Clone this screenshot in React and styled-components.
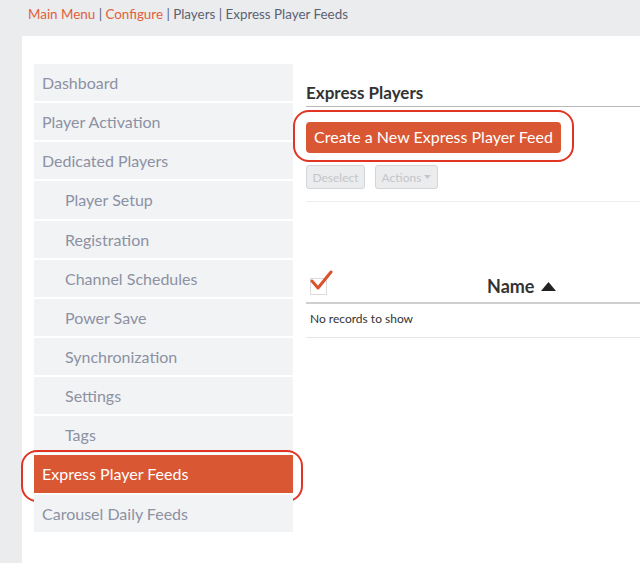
import React from "react";
import styled, { createGlobalStyle } from "styled-components";

const GlobalStyle = createGlobalStyle`
  html, body {
    margin: 0;
    padding: 0;
    background: #ebecee;
    font-family: Lato, "Noto Sans", sans-serif;
    overflow: hidden;
  }
`;

const Page = styled.div`
  width: 640px;
  height: 563px;
  display: flex;
  flex-direction: column;
  overflow: hidden;
`;

const Breadcrumb = styled.div`
  height: 36px;
  flex: none;
  display: flex;
  align-items: center;
  padding: 0 0 8px 28px;
  box-sizing: border-box;
  font-size: 13.4px;
  color: #5b6172;
  white-space: pre;
`;

const Crumb = styled.span`
  color: #e0603a;
`;

const Panel = styled.div`
  flex: 1;
  margin-left: 22px;
  background: #fff;
  display: flex;
  gap: 13px;
  padding: 28px 0 0 12px;
`;

const Sidebar = styled.div`
  width: 259px;
  flex: none;
  display: flex;
  flex-direction: column;
  gap: 2px;
`;

const NavItem = styled.div`
  position: relative;
  height: 37.15px;
  display: flex;
  align-items: center;
  padding-left: ${(p) => (p.$sub ? 31 : 8)}px;
  background: ${(p) => (p.$active ? "#d95833" : "#f2f3f5")};
  color: ${(p) => (p.$active ? "#fff" : "#8c91a3")};
  font-size: 16px;
`;

const Ring = styled.div`
  position: absolute;
  left: ${(p) => p.$l}px;
  right: ${(p) => p.$r}px;
  top: ${(p) => p.$t}px;
  bottom: ${(p) => p.$b}px;
  border: 2px solid #e23424;
  border-radius: 16px;
  pointer-events: none;
`;

const Main = styled.div`
  width: 420px;
  flex: none;
  display: flex;
  flex-direction: column;
`;

const Heading = styled.h2`
  margin: 18px 0 0;
  padding-bottom: 3px;
  font-size: 17px;
  font-weight: 700;
  color: #333;
  border-bottom: 1px solid #b9b9b9;
`;

const CreateButton = styled.button`
  position: relative;
  align-self: flex-start;
  margin-top: 15px;
  width: 255px;
  height: 31px;
  border: none;
  border-radius: 4px;
  background: #d95833;
  color: #fff;
  font-family: inherit;
  font-size: 16px;
  padding: 0 0 2px;
`;

const Toolbar = styled.div`
  display: flex;
  gap: 10px;
  margin-top: 12px;
  padding-bottom: 12px;
  border-bottom: 1px solid #ededed;
`;

const GhostButton = styled.button`
  height: 24px;
  width: ${(p) => p.$w}px;
  border: 1px solid #d3d5d8;
  border-radius: 3px;
  background: #ebecee;
  color: #c3c6cb;
  font-family: inherit;
  font-size: 12px;
  padding: 0;
  display: flex;
  align-items: center;
  justify-content: center;
  gap: 3px;
`;

const TableHead = styled.div`
  margin-top: 67px;
  height: 28px;
  display: flex;
  align-items: flex-end;
  border-bottom: 2px solid #cfcfcf;
  padding-bottom: 5px;
`;

const CheckCell = styled.div`
  width: 181px;
  flex: none;
  position: relative;
  height: 22px;
`;

const Box = styled.div`
  position: absolute;
  left: 4px;
  top: 3px;
  width: 15px;
  height: 15px;
  border: 1px solid #dcdcdc;
  background: #fff;
`;

const Mark = styled.svg`
  position: absolute;
  left: 4px;
  top: -6px;
`;

const NameCell = styled.div`
  display: flex;
  align-items: center;
  gap: 7px;
  font-size: 18px;
  font-weight: 700;
  color: #333;
  line-height: 22px;
`;

const EmptyRow = styled.div`
  height: 34px;
  box-sizing: border-box;
  padding: 7px 0 0 4px;
  font-size: 12px;
  color: #333;
  border-bottom: 1px solid #e6e6e6;
`;

const items = [
  { label: "Dashboard" },
  { label: "Player Activation" },
  { label: "Dedicated Players" },
  { label: "Player Setup", sub: true },
  { label: "Registration", sub: true },
  { label: "Channel Schedules", sub: true },
  { label: "Power Save", sub: true },
  { label: "Synchronization", sub: true },
  { label: "Settings", sub: true },
  { label: "Tags", sub: true },
  { label: "Express Player Feeds", active: true },
  { label: "Carousel Daily Feeds" },
];

export default function App() {
  return (
    <Page>
      <GlobalStyle />
      <Breadcrumb>
        <Crumb>Main Menu</Crumb> | <Crumb>Configure</Crumb> | Players | Express Player Feeds
      </Breadcrumb>
      <Panel>
        <Sidebar>
          {items.map((it) => (
            <NavItem key={it.label} $sub={it.sub} $active={it.active}>
              {it.label}
              {it.active && <Ring $l={-13} $r={-10} $t={-5} $b={-9} />}
            </NavItem>
          ))}
        </Sidebar>
        <Main>
          <Heading>Express Players</Heading>
          <CreateButton>
            Create a New Express Player Feed
            <Ring $l={-13} $r={-13} $t={-12} $b={-9} />
          </CreateButton>
          <Toolbar>
            <GhostButton $w={59}>Deselect</GhostButton>
            <GhostButton $w={63}>
              Actions
              <svg width="7" height="4" viewBox="0 0 7 4">
                <path d="M0 0h7L3.5 4z" fill="#c3c6cb" />
              </svg>
            </GhostButton>
          </Toolbar>
          <TableHead>
            <CheckCell>
              <Box />
              <Mark width="24" height="22" viewBox="0 0 24 22">
                <path
                  d="M2 12l6 7L21 3"
                  fill="none"
                  stroke="#d9532c"
                  strokeWidth="3"
                  strokeLinecap="round"
                  strokeLinejoin="round"
                />
              </Mark>
            </CheckCell>
            <NameCell>
              Name
              <svg width="15" height="9" viewBox="0 0 15 9">
                <path d="M7.5 0L15 9H0z" fill="#222" />
              </svg>
            </NameCell>
          </TableHead>
          <EmptyRow>No records to show</EmptyRow>
        </Main>
      </Panel>
    </Page>
  );
}
